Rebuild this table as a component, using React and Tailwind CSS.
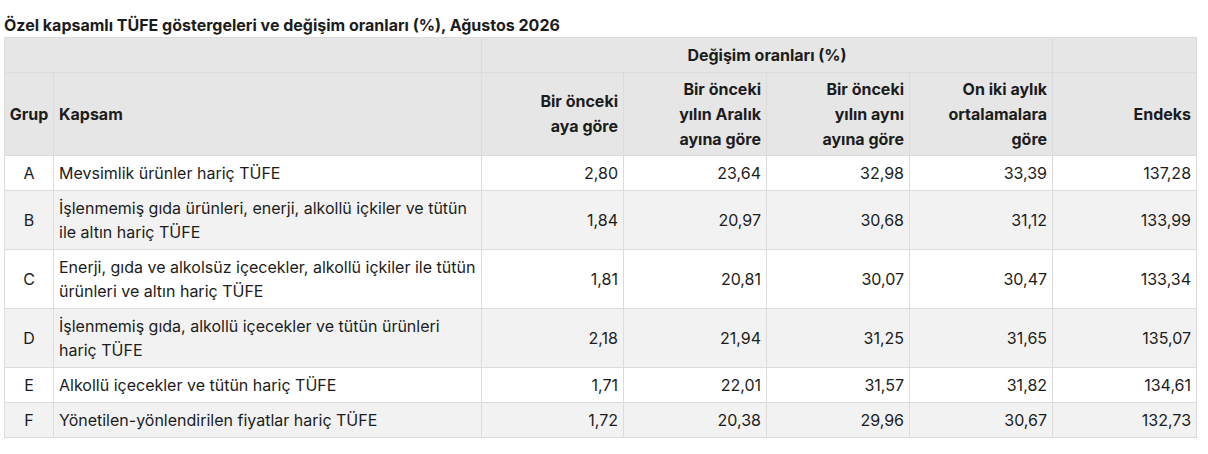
const ROWS = [
  ['A', ['Mevsimlik ürünler hariç TÜFE'], '2,80', '23,64', '32,98', '33,39', '137,28'],
  ['B', ['İşlenmemiş gıda ürünleri, enerji, alkollü içkiler ve tütün', 'ile altın hariç TÜFE'], '1,84', '20,97', '30,68', '31,12', '133,99'],
  ['C', ['Enerji, gıda ve alkolsüz içecekler, alkollü içkiler ile tütün', 'ürünleri ve altın hariç TÜFE'], '1,81', '20,81', '30,07', '30,47', '133,34'],
  ['D', ['İşlenmemiş gıda, alkollü içecekler ve tütün ürünleri', 'hariç TÜFE'], '2,18', '21,94', '31,25', '31,65', '135,07'],
  ['E', ['Alkollü içecekler ve tütün hariç TÜFE'], '1,71', '22,01', '31,57', '31,82', '134,61'],
  ['F', ['Yönetilen-yönlendirilen fiyatlar hariç TÜFE'], '1,72', '20,38', '29,96', '30,67', '132,73'],
];

const th = 'border border-[#dcdcdc] bg-[#e6e6e6] font-bold text-[16px] leading-[25px]';
const td = 'border border-[#dcdcdc] text-[16px] leading-[24px]';

export default function App() {
  return (
    <div className="bg-white w-[1208px] h-[454px] pl-1 pt-[13px] text-[#1c1c1c]" style={{ fontFamily: 'Inter, "Noto Sans", sans-serif' }}>
      <div className="text-[16px] font-bold leading-[24px] h-[24px]">
        Özel kapsamlı TÜFE göstergeleri ve değişim oranları (%), Ağustos 2026
      </div>
      <table className="border-collapse w-[1192px] table-fixed">
        <colgroup>
          <col className="w-[49px]" />
          <col className="w-[428px]" />
          <col className="w-[142px]" />
          <col className="w-[143px]" />
          <col className="w-[143px]" />
          <col className="w-[143px]" />
          <col className="w-[144px]" />
        </colgroup>
        <thead>
          <tr className="h-[35px]">
            <th colSpan={2} className={th}></th>
            <th colSpan={4} className={`${th} text-center`}>Değişim oranları (%)</th>
            <th className={th}></th>
          </tr>
          <tr className="h-[83px]">
            <th className={`${th} text-center px-1`}>Grup</th>
            <th className={`${th} text-left px-[5px]`}>Kapsam</th>
            <th className={`${th} text-right px-[5px]`}>Bir önceki<br />aya göre</th>
            <th className={`${th} text-right px-[5px]`}>Bir önceki<br />yılın Aralık<br />ayına göre</th>
            <th className={`${th} text-right px-[5px]`}>Bir önceki<br />yılın aynı<br />ayına göre</th>
            <th className={`${th} text-right px-[5px]`}>On iki aylık<br />ortalamalara<br />göre</th>
            <th className={`${th} text-right px-[5px]`}>Endeks</th>
          </tr>
        </thead>
        <tbody>
          {ROWS.map(([g, lines, ...nums], i) => (
            <tr key={g} className={`${lines.length > 1 ? 'h-[59px]' : 'h-[35px]'} ${i % 2 ? 'bg-[#f2f2f2]' : 'bg-white'}`}>
              <td className={`${td} text-center`}>{g}</td>
              <td className={`${td} text-left px-[5px]`}>
                {lines.map((l, j) => <div key={j}>{l}</div>)}
              </td>
              {nums.map((n, j) => (
                <td key={j} className={`${td} text-right px-[5px]`}>{n}</td>
              ))}
            </tr>
          ))}
        </tbody>
      </table>
    </div>
  );
}
